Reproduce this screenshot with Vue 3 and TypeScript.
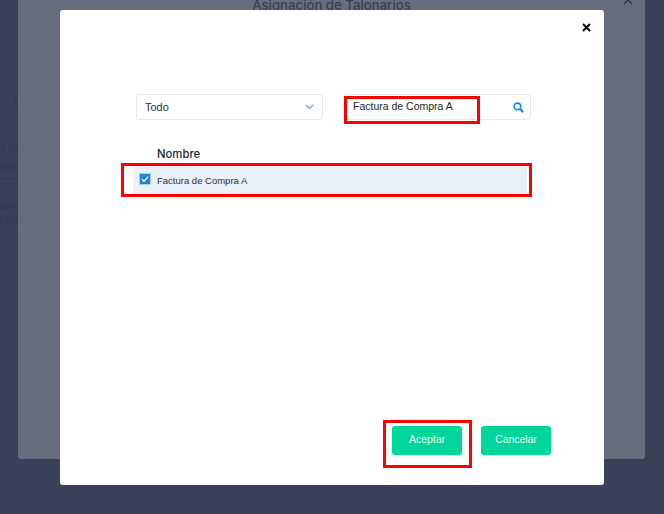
<script setup lang="ts">
const selected: string = 'Todo'
const query: string = 'Factura de Compra A'
</script>

<template>
  <div class="page">
    <div class="backtext">
      <span class="b1">t</span>
      <span class="b2">s de c</span>
      <span class="b3">ario</span>
      <span class="bline"></span>
      <span class="b4">ario</span>
      <span class="b5">cion</span>
    </div>
    <div class="panel">
      <div class="panel-title">Asignación de Talonarios</div>
      <svg class="panel-close" width="10" height="10" viewBox="0 0 10 10"><path d="M1 1l8 8M9 1l-8 8" stroke="#2e3346" stroke-width="1.4" /></svg>
    </div>
    <div class="modal">
      <div class="modal-head">
        <svg class="close" width="9" height="9" viewBox="0 0 9 9"><path d="M1 1l7 7M8 1L1 8" stroke="#000" stroke-width="1.9" /></svg>
      </div>
      <div class="filters">
        <div class="field select">
          <span>{{ selected }}</span>
          <svg width="9" height="6" viewBox="0 0 9 6"><path d="M1 1l3.5 3.5L8 1" fill="none" stroke="#4f9fe0" stroke-width="1.1" /></svg>
        </div>
        <div class="field search">
          <span>{{ query }}</span>
          <svg width="11" height="11" viewBox="0 0 11 11"><circle cx="4.4" cy="4.4" r="3.3" fill="none" stroke="#0f8af0" stroke-width="1.6" /><path d="M7 7l3.2 3.2" stroke="#0f8af0" stroke-width="2" /></svg>
        </div>
      </div>
      <div class="table-head">Nombre</div>
      <div class="row">
        <span class="check">
          <svg width="10" height="10" viewBox="0 0 11 11"><path d="M2 5.6l2.4 2.4L9 3" fill="none" stroke="#fff" stroke-width="1.3" /></svg>
        </span>
        <span class="row-text">Factura de Compra A</span>
      </div>
      <div class="spacer"></div>
      <div class="actions">
        <button class="btn" type="button">Aceptar</button>
        <button class="btn" type="button">Cancelar</button>
      </div>
    </div>
    <div class="mark mark-search"></div>
    <div class="mark mark-row"></div>
    <div class="mark mark-btn"></div>
  </div>
</template>

<style>
html, body { margin: 0; padding: 0; background: #394058; }
</style>

<style scoped>
.page {
  position: relative;
  width: 664px;
  height: 514px;
  overflow: hidden;
  background: #394058;
  font-family: "Liberation Sans", Arial, sans-serif;
}
.backtext span {
  position: absolute;
  left: 0;
  width: 18px;
  overflow: hidden;
  white-space: nowrap;
  text-align: right;
  font: 11px "Inter", sans-serif;
  color: #333950;
}
.b1 { top: 94px; }
.b2 { top: 142px; }
.b3 { top: 159px; }
.b4 { top: 199px; }
.b5 { top: 214px; }
.backtext .bline { top: 178px; height: 1px; background: #343a50; }
.panel {
  position: absolute;
  left: 18px;
  top: -40px;
  width: 627px;
  height: 499px;
  border-radius: 3px;
  background: #686d7e;
}
.panel-title {
  position: absolute;
  left: 0;
  right: 0;
  top: 37px;
  text-align: center;
  font: 500 13.2px "Inter", sans-serif;
  color: #3a3f52;
}
.panel-close { position: absolute; left: 605px; top: 35px; }
.modal {
  position: absolute;
  left: 60px;
  top: 10px;
  width: 544px;
  height: 475px;
  box-sizing: border-box;
  padding: 0 73px 30px 73px;
  display: flex;
  flex-direction: column;
  background: #fff;
  border-radius: 3px;
}
.modal-head {
  height: 84px;
  position: relative;
}
.close { position: absolute; right: -60px; top: 13px; }
.filters {
  display: flex;
  justify-content: space-between;
  margin-left: 3px;
}
.field {
  box-sizing: border-box;
  height: 26px;
  width: 187px;
  border: 1px solid #e6e8ec;
  border-radius: 3px;
  display: flex;
  align-items: center;
  justify-content: space-between;
  font-size: 11px;
  color: #2b2f3a;
}
.select { padding: 0 8px; }
.search { padding: 0 6px 0 8px; font-size: 10.5px; color: #1c1f28; }
.search span { margin-top: -2px; }
.table-head {
  margin: 26px 0 0 24px;
  height: 16px;
  font: 500 11.3px/16px "Inter", sans-serif;
  color: #1f2433;
}
.row {
  box-sizing: border-box;
  width: 394px;
  height: 28px;
  margin-top: 4px;
  padding-left: 6px;
  display: flex;
  align-items: center;
  background: #eaf0f8;
}
.check {
  box-sizing: border-box;
  width: 12px;
  height: 12px;
  margin: -2px 6px 0 0;
  background: #1b87d6;
  border: 1px solid #b9c6d3;
  display: flex;
  align-items: center;
  justify-content: center;
}
.row-text {
  font-size: 9.5px;
  color: #2b2f3a;
}
.spacer { flex: 1; }
.actions {
  display: flex;
  justify-content: flex-end;
  gap: 19px;
  margin-right: -20px;
}
.btn {
  width: 70px;
  height: 29px;
  padding: 0 0 2px;
  border: 0;
  border-radius: 3px;
  background: #00d69b;
  color: #e8fff7;
  font: 10.4px "Liberation Sans", Arial, sans-serif;
}
.mark {
  position: absolute;
  box-sizing: border-box;
  border: 3px solid #f00;
}
.mark-search { left: 344px; top: 96px; width: 136px; height: 28px; }
.mark-row { left: 121px; top: 163px; width: 411px; height: 34px; }
.mark-btn { left: 383px; top: 420px; width: 89px; height: 48px; }
</style>
